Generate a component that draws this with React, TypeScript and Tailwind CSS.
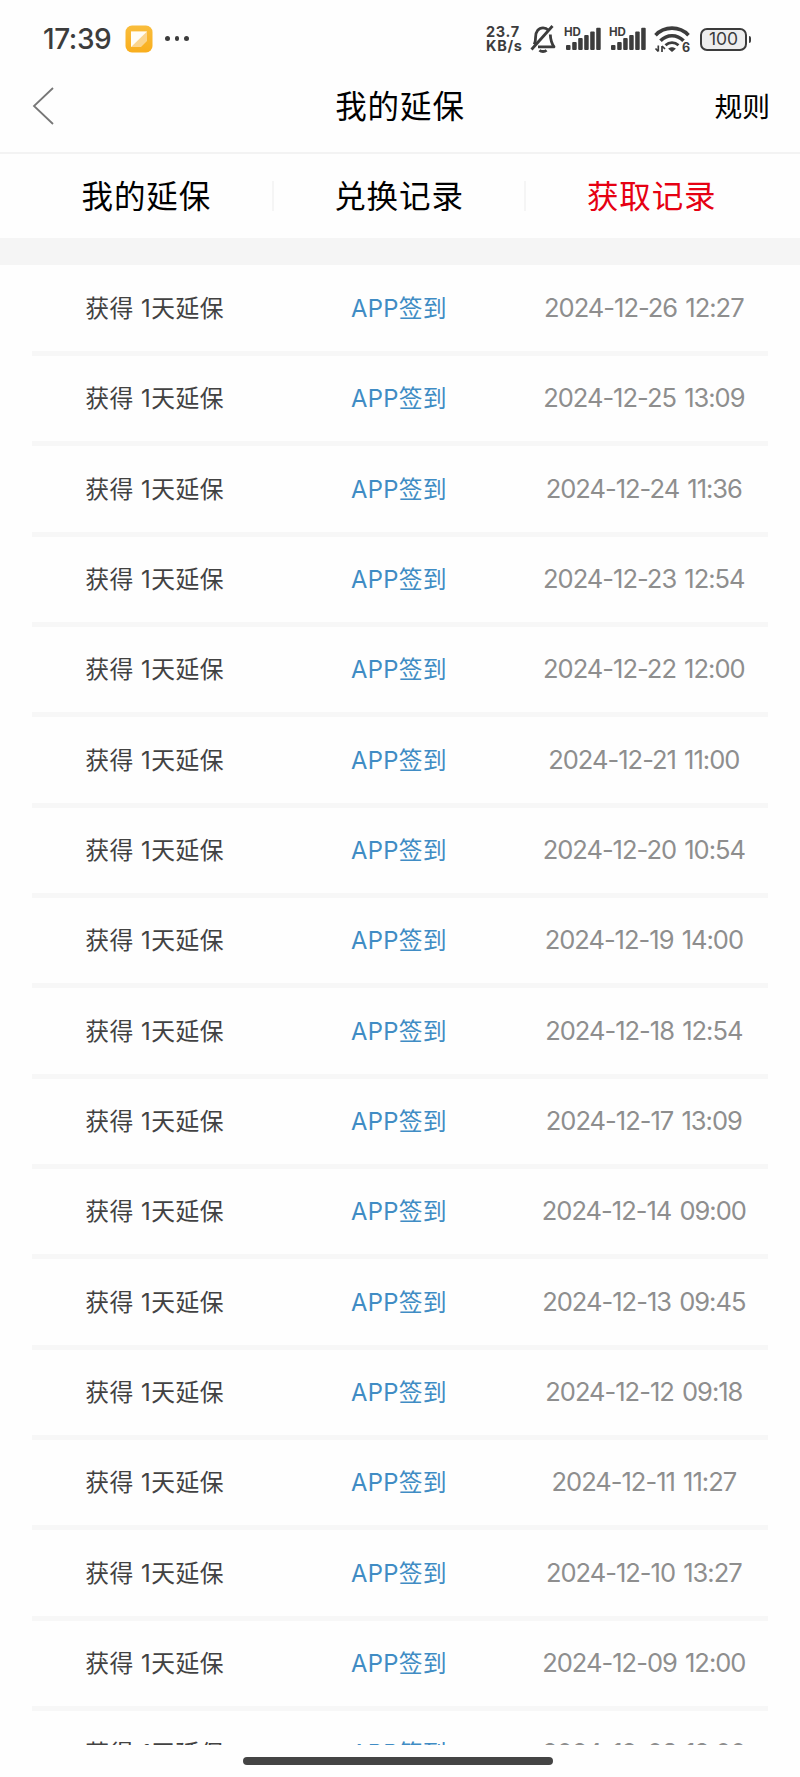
import { useState } from 'react';
import clsx from 'clsx';

const TABS = ['我的延保', '兑换记录', '获取记录'];

const RECORDS = [
  '2024-12-26 12:27',
  '2024-12-25 13:09',
  '2024-12-24 11:36',
  '2024-12-23 12:54',
  '2024-12-22 12:00',
  '2024-12-21 11:00',
  '2024-12-20 10:54',
  '2024-12-19 14:00',
  '2024-12-18 12:54',
  '2024-12-17 13:09',
  '2024-12-14 09:00',
  '2024-12-13 09:45',
  '2024-12-12 09:18',
  '2024-12-11 11:27',
  '2024-12-10 13:27',
  '2024-12-09 12:00',
  '2024-12-08 12:00',
];

function NoteIcon() {
  return (
    <svg width="28" height="28" viewBox="0 0 28 28">
      <defs>
        <linearGradient id="note" x1="0" y1="0" x2="0" y2="1">
          <stop offset="0" stopColor="#f9bd3c" />
          <stop offset="1" stopColor="#f9ae1d" />
        </linearGradient>
      </defs>
      <rect x="0.5" y="0.5" width="27" height="27" rx="6.5" fill="url(#note)" />
      <path d="M6 6.5h16v9.5l-6 6H6z" fill="#fbd58e" />
      <path d="M6 6.5h16L6 22z" fill="#fffdf6" />
    </svg>
  );
}

function MuteIcon() {
  return (
    <svg width="28" height="30" viewBox="0 0 28 30" fill="none" stroke="#3c3c3c" strokeWidth="2.8">
      <path d="M5.2 20.5c1.2-2.2 1.4-4.6 1.4-7.5 0-5.4 3-9.2 7.4-9.2 2.2 0 4 .8 5.3 2.3" />
      <path d="M21.3 10.5c.2 5.2.8 8 3.7 12.3H9" strokeLinejoin="round" />
      <path d="M23.5 2 2.5 25.5" />
      <path d="M10.5 26.2c1.8 1.7 5.2 1.7 7 0" />
    </svg>
  );
}

function SignalIcon() {
  return (
    <div className="relative h-6 w-9">
      <span className="absolute -left-px -top-[1px] text-[11.5px] leading-[12px] font-bold">HD</span>
      <svg width="36" height="24" viewBox="0 0 36 24" fill="#3c3c3c">
        <rect x="1" y="18" width="4.5" height="5" rx="1" />
        <rect x="7.2" y="15" width="4.5" height="8" rx="1" />
        <rect x="13.2" y="11" width="4.5" height="12" rx="1" />
        <rect x="19.2" y="8" width="4.5" height="15" rx="1" />
        <rect x="25.2" y="4.5" width="4.5" height="18.5" rx="1" />
        <rect x="31.2" y="0.8" width="4.5" height="22.2" rx="1" />
      </svg>
    </div>
  );
}

function WifiIcon() {
  return (
    <div className="relative h-[27px] w-9">
      <svg width="36" height="27" viewBox="0 0 36 27" fill="none" stroke="#3c3c3c" strokeWidth="3.6">
        <path d="M1.5 9.2C10.5-.2 25.5-.2 34.5 9.2" />
        <path d="M6.5 14.8c6.5-6.8 16.5-6.8 23 0" />
        <path d="M11.5 19.2c3.8-3.5 9.2-3.5 13 0" strokeWidth="2.8" />
        <path d="m18 26-3.8-3.3c2-2 5.6-2 7.6 0z" fill="#3c3c3c" stroke="none" />
        <path d="M4.3 19.5v6M4.3 25.5 1.5 22.5M8 26v-6M8 20l3 3" strokeWidth="1.7" />
      </svg>
      <span className="absolute right-0 top-[15px] text-[12.5px] leading-[13px] font-bold">6</span>
    </div>
  );
}

function StatusBar() {
  return (
    <div className="flex h-[77px] shrink-0 items-center pl-[43px] pr-[49px] text-[#3c3c3c]">
      <span className="w-[82px] text-[28px] leading-none font-medium tracking-[-0.4px]">17:39</span>
      <NoteIcon />
      <div className="ml-[12px] flex gap-[5px]">
        <i className="size-[4.5px] rounded-full bg-[#3c3c3c]" />
        <i className="size-[4.5px] rounded-full bg-[#3c3c3c]" />
        <i className="size-[4.5px] rounded-full bg-[#3c3c3c]" />
      </div>
      <div className="ml-auto flex items-center pt-px">
        <div className="w-[43px] text-[14.5px] leading-[14px] font-bold">
          <p className="tracking-[0.7px]">23.7</p>
          <p className="tracking-[0.7px]">KB/s</p>
        </div>
        <MuteIcon />
        <div className="ml-[8px] flex gap-[9px]">
          <SignalIcon />
          <SignalIcon />
        </div>
        <div className="ml-[8px]">
          <WifiIcon />
        </div>
        <div className="ml-[10px] flex h-[23px] w-[47px] items-center justify-center rounded-[7px] border-2 border-[#3c3c3c] bg-[#eeeeee] text-[17.5px] leading-none">
          100
        </div>
        <i className="ml-[2px] h-[7px] w-[2px] rounded-r bg-[#3c3c3c]" />
      </div>
    </div>
  );
}

export default function App() {
  const [active, setActive] = useState(2);

  return (
    <div className="flex h-[1777px] w-[800px] flex-col overflow-hidden bg-[#fefefe] font-['Inter','Noto_Sans_CJK_SC',sans-serif] text-black">
      <StatusBar />

      <header className="grid h-[77px] shrink-0 grid-cols-3 items-center border-b-2 border-[#f3f3f3] pl-8 pr-[30px] pb-[17px]">
        <button aria-label="返回">
          <svg width="22" height="38" viewBox="0 0 22 38" fill="none" stroke="#777" strokeWidth="1.8">
            <path d="M21 1 2 19l19 18" />
          </svg>
        </button>
        <h1 className="pt-px pr-[2px] text-center text-[31.5px] leading-none tracking-[0.9px]">我的延保</h1>
        <button className="pt-[3px] text-right text-[27.8px] leading-none">规则</button>
      </header>

      <nav className="flex h-[84px] shrink-0 items-center px-[21px]">
        {TABS.map((tab, i) => (
          <button
            key={tab}
            onClick={() => setActive(i)}
            className={clsx(
              'h-[30px] flex-1 text-[31.5px] leading-[32px] tracking-[0.9px]',
              i < TABS.length - 1 && 'border-r-2 border-[#f5f5f5]',
              i === active && 'pr-[2px] text-[#e60012]',
            )}
          >
            {tab}
          </button>
        ))}
      </nav>

      <div className="h-[27px] shrink-0 bg-[#f5f5f5]" />

      <ul className="h-[1479.5px] shrink-0 overflow-hidden px-8 pt-[0.7px]">
        {RECORDS.map((time) => (
          <li key={time} className="grid h-[90.34px] grid-cols-3 items-center border-b-[5px] border-[#f7f7f7] text-center text-[23.8px] leading-none tracking-[0.5px]">
            <span className="pt-px text-[#424242]">获得 1天延保</span>
            <span className="pt-px pr-[2px] tracking-[0.3px] text-[#408cc4]">APP签到</span>
            <span className="pr-[3px] pb-px text-[25.5px] font-[370] tracking-[-1px] [word-spacing:2px] whitespace-nowrap text-[#8e8e8e]">{time}</span>
          </li>
        ))}
      </ul>

      <div className="ml-[243px] mt-3 h-2 w-[310px] shrink-0 rounded-full bg-[#444]" />
    </div>
  );
}
